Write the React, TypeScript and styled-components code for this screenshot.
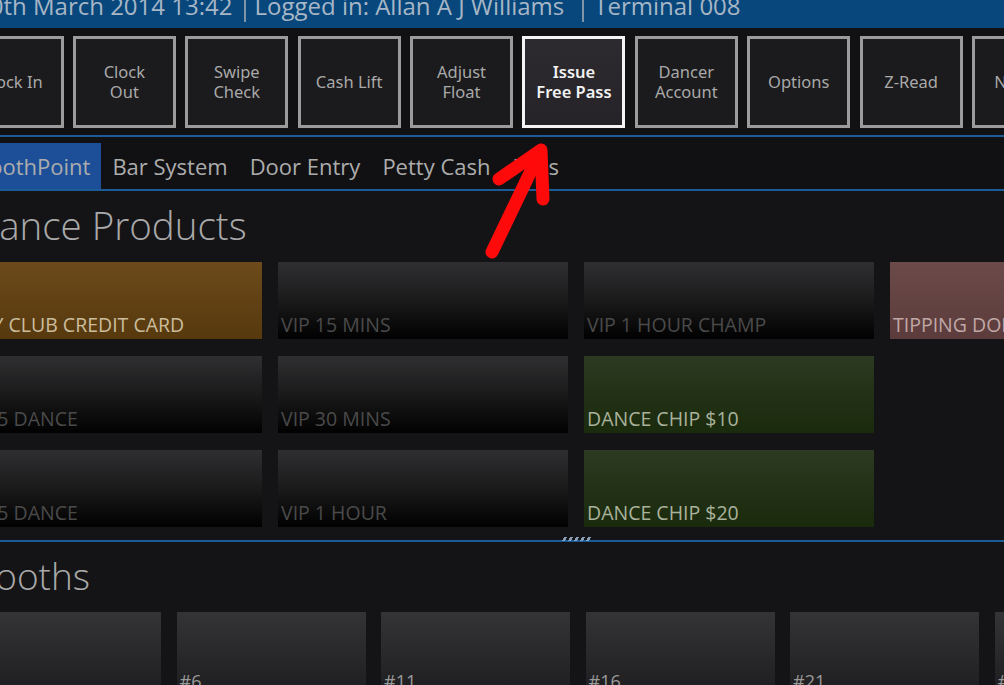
import React from "react";
import styled, { createGlobalStyle, css } from "styled-components";

const Global = createGlobalStyle`
  html, body { margin: 0; padding: 0; background: #141416; }
  body { width: 1004px; height: 685px; overflow: hidden; font-family: "Open Sans", "Noto Sans", sans-serif; }
  #root { width: 1004px; height: 685px; overflow: hidden; position: relative; }
`;

const Screen = styled.div`
  width: 1004px;
  height: 685px;
  overflow: hidden;
  position: relative;
  display: flex;
  flex-direction: column;
  background: #141416;
`;

const HeaderBar = styled.div`
  height: 28px;
  flex: none;
  background: #07477b;
  display: flex;
  align-items: flex-start;
  overflow: hidden;
`;

const HeaderItem = styled.span<{ $shift?: number }>`
  font-size: 24px;
  line-height: 26px;
  margin-top: -7px;
  color: #a7b6c6;
  white-space: nowrap;
  margin-left: ${(p) => p.$shift ?? 0}px;
`;

const HeaderSep = styled.span<{ $before: number; $after: number }>`
  width: 2px;
  height: 22px;
  background: #8094a8;
  margin: 0 ${(p) => p.$after}px 0 ${(p) => p.$before}px;
  flex: none;
`;

const Toolbar = styled.div`
  height: 107px;
  flex: none;
  background: #111113;
  display: flex;
  gap: 9.4px;
  padding-top: 8px;
  box-sizing: border-box;
  margin-left: -39.5px;
`;

const ToolButton = styled.div<{ $active?: boolean }>`
  width: 103px;
  height: 92px;
  flex: none;
  box-sizing: border-box;
  border: 3px solid #9b9b9b;
  background: #1b1a1c;
  display: flex;
  flex-direction: column;
  align-items: center;
  justify-content: center;
  text-align: center;
  font-size: 16.5px;
  line-height: 20px;
  color: #a9a9a9;
  font-family: "Noto Sans", "Open Sans", sans-serif;
  ${(p) =>
    p.$active &&
    css`
      border-color: #f4f4f4;
      background: linear-gradient(#2d2b30, #252328);
      color: #f2f2f2;
      font-weight: 600;
    `}
`;

const ButtonLine = styled.span`
  display: block;
  height: 20px;
  white-space: nowrap;
`;

const BlueRule = styled.div`
  height: 2px;
  flex: none;
  background: #1b5c98;
`;

const TabRow = styled.div`
  height: 52px;
  flex: none;
  background: #111113;
  display: flex;
  align-items: flex-end;
  margin-left: -36px;
`;

const Tab = styled.div<{ $active?: boolean }>`
  height: 46px;
  padding: 0 11px;
  display: flex;
  align-items: center;
  font-size: 22px;
  color: #acacac;
  white-space: nowrap;
  background: ${(p) => (p.$active ? "#1d4f99" : "transparent")};
`;

const Section = styled.div`
  display: flex;
  flex-direction: column;
  margin-left: -28px;
`;

const Heading = styled.div<{ $top: number; $bottom?: number; $size?: number }>`
  font-size: ${(p) => p.$size ?? 38.5}px;
  font-weight: 300;
  color: #a9a9a9;
  line-height: 44px;
  white-space: nowrap;
  margin-top: ${(p) => p.$top}px;
  margin-bottom: ${(p) => p.$bottom ?? 0}px;
`;

const ProductGrid = styled.div`
  display: grid;
  grid-template-columns: repeat(4, 290px);
  grid-auto-rows: 77px;
  column-gap: 16px;
  row-gap: 17px;
`;

const tones = {
  dark: { bg: "linear-gradient(#2f2f31, #1a1a1b 50%, #010101)", fg: "#4a4a4a" },
  gold: { bg: "linear-gradient(#6c4a1b, #57390e)", fg: "#cbbd9d" },
  green: { bg: "linear-gradient(#2c3a21, #1a2a0c)", fg: "#a9b29c" },
  rose: { bg: "linear-gradient(#6c4a4a, #5b3b3b)", fg: "#c0a8a6" },
  empty: { bg: "transparent", fg: "transparent" },
};

type Tone = keyof typeof tones;

const Tile = styled.div<{ $tone: Tone }>`
  background: ${(p) => tones[p.$tone].bg};
  color: ${(p) => tones[p.$tone].fg};
  display: flex;
  align-items: flex-end;
  padding: 0 0 1px 3px;
  box-sizing: border-box;
  font-size: 19.5px;
  line-height: 26px;
  white-space: nowrap;
  overflow: hidden;
  text-transform: uppercase;
`;

const Splitter = styled.div`
  height: 2px;
  flex: none;
  background: #1b5c98;
  position: relative;
  margin-top: 13px;
`;

const Grip = styled.div`
  position: absolute;
  left: 563px;
  top: -3px;
  width: 29px;
  height: 4px;
  background: repeating-linear-gradient(90deg, #8aa0b8 0 3px, transparent 3px 6px);
  transform: skewX(-30deg);
`;

const BoothRow = styled.div`
  display: flex;
  gap: 15.5px;
  margin-top: 14px;
`;

const Booth = styled.div`
  width: 189px;
  height: 80px;
  flex: none;
  background: linear-gradient(#343436, #1e1e20);
  color: #9a9a9a;
  font-size: 18px;
  display: flex;
  align-items: flex-end;
  padding: 0 0 0 3px;
  box-sizing: border-box;
  line-height: 22px;
`;

const ArrowLayer = styled.svg`
  position: absolute;
  left: 0;
  top: 0;
  pointer-events: none;
`;

const buttons = [
  ["Clock In"],
  ["Clock", "Out"],
  ["Swipe", "Check"],
  ["Cash Lift"],
  ["Adjust", "Float"],
  ["Issue", "Free Pass"],
  ["Dancer", "Account"],
  ["Options"],
  ["Z-Read"],
  ["No Sale"],
];

const products: { label: string; tone: Tone }[] = [
  { label: "My Club Credit Card", tone: "gold" },
  { label: "VIP 15 Mins", tone: "dark" },
  { label: "VIP 1 Hour Champ", tone: "dark" },
  { label: "Tipping Dollars", tone: "rose" },
  { label: "$25 Dance", tone: "dark" },
  { label: "VIP 30 Mins", tone: "dark" },
  { label: "Dance Chip $10", tone: "green" },
  { label: "", tone: "empty" },
  { label: "$35 Dance", tone: "dark" },
  { label: "VIP 1 Hour", tone: "dark" },
  { label: "Dance Chip $20", tone: "green" },
  { label: "", tone: "empty" },
];

const booths = ["#1", "#6", "#11", "#16", "#21", "#26"];

export default function App() {
  return (
    <Screen>
      <Global />
      <HeaderBar>
        <HeaderItem $shift={-24}>10th March 2014 13:42</HeaderItem>
        <HeaderSep $before={12} $after={8} />
        <HeaderItem>Logged in: Allan A J Williams</HeaderItem>
        <HeaderSep $before={18} $after={10} />
        <HeaderItem>Terminal 008</HeaderItem>
      </HeaderBar>
      <Toolbar>
        {buttons.map((lines, i) => (
          <ToolButton key={i} $active={i === 5}>
            {lines.map((l, j) => (
              <ButtonLine key={j}>{l}</ButtonLine>
            ))}
          </ToolButton>
        ))}
      </Toolbar>
      <BlueRule />
      <TabRow>
        <Tab $active>BoothPoint</Tab>
        <Tab>Bar System</Tab>
        <Tab>Door Entry</Tab>
        <Tab>Petty Cash</Tab>
        <Tab>Fees</Tab>
      </TabRow>
      <BlueRule />
      <Section>
        <Heading $top={12} $bottom={15}>Dance Products</Heading>
        <ProductGrid>
          {products.map((p, i) => (
            <Tile key={i} $tone={p.tone}>
              {p.label}
            </Tile>
          ))}
        </ProductGrid>
      </Section>
      <Splitter>
        <Grip />
      </Splitter>
      <Section>
        <Heading $top={12} $size={37}>Booths</Heading>
        <BoothRow>
          {booths.map((b, i) => (
            <Booth key={i}>{i === 0 ? "" : b}</Booth>
          ))}
        </BoothRow>
      </Section>
      <ArrowLayer width="1004" height="685" viewBox="0 0 1004 685">
        <g stroke="#ff0a0a" strokeWidth="13" strokeLinecap="round" strokeLinejoin="round" fill="none">
          <line x1="492" y1="252" x2="540" y2="152" />
          <polyline points="499,179 541,150 543,199" />
        </g>
      </ArrowLayer>
    </Screen>
  );
}
